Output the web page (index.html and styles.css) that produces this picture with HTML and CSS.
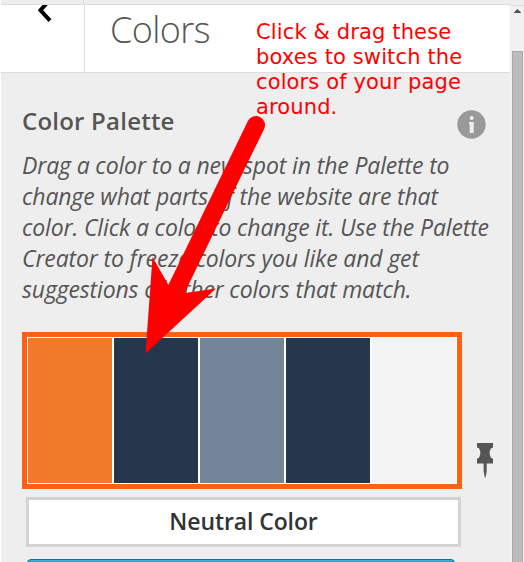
FILE: index.html
```
<!DOCTYPE html>
<html lang="en">
<head>
<meta charset="utf-8">
<title>Colors</title>
<link rel="stylesheet" href="styles.css">
</head>
<body>
<div class="app">
  <main class="panel">
    <div class="strip"><span class="strip-cell"></span></div>
    <header class="header">
      <div class="back">
        <svg width="18" height="20" viewBox="0 0 18 20"><path d="M15 -5.500 L5.500 5.300 L15 15.600" fill="none" stroke="#000" stroke-width="4"/></svg>
      </div>
      <h1 class="title">Colors</h1>
    </header>
    <section class="content">
      <div class="heading">
        <h2 class="subtitle">Color Palette</h2>
        <svg class="info" width="29" height="29" viewBox="0 0 29 29"><circle cx="14.500" cy="14.500" r="14.200" fill="#999"/><circle cx="14.700" cy="8" r="2" fill="#eee"/><path d="M12 12h4.700v11h-4v-8.500H12z" fill="#eee"/></svg>
      </div>
      <p class="description">Drag a color to a new spot in the Palette to<br>change what parts of the website are that<br>color. Click a color to change it. Use the Palette<br>Creator to freeze colors you like and get<br>suggestions of other colors that match.</p>
      <div class="palette-row">
        <div class="palette">
          <div class="swatch orange"></div>
          <div class="swatch navy"></div>
          <div class="swatch slate"></div>
          <div class="swatch navy"></div>
          <div class="swatch light"></div>
        </div>
        <svg class="pin" width="18" height="36" viewBox="0 0 18 36"><path d="M1 0h16v4.500l-2 .8Q12.300 10 15 14.800l2 1v4.700h-6.300v7.500L9.600 34.500h-.8L7.600 28v-7.500H1v-4.700l2-1Q5.700 10 3 5.300l-2-.8z" fill="#555"/></svg>
      </div>
      <div class="neutral">Neutral Color</div>
      <div class="primary"></div>
    </section>
  </main>
  <aside class="scrollbar">
    <svg class="up" width="7" height="4" viewBox="0 0 7 4"><path d="M3.500 0L7 3.500V4H0v-.5z" fill="#505050"/></svg>
    <div class="thumb"></div>
  </aside>
  <p class="note">Click &amp; drag these<br>boxes to switch the<br>colors of your page<br>around.</p>
  <svg class="arrow" width="524" height="562" viewBox="0 0 524 562"><path d="M256 125L174 294" stroke="#f00" stroke-width="18" stroke-linecap="round"/><path d="M145.500 353.500L152.500 257L168.500 285L185 293L216 288.500Z" fill="#f00"/></svg>
</div>
</body>
</html>
```
FILE: styles.css
```
* { box-sizing: border-box; }
body { margin: 0; background: #fff; font-family: "Open Sans", sans-serif; color: #555; }
.app { position: relative; width: 524px; height: 562px; display: flex; overflow: hidden; padding-left: 1px; }
.panel { width: 509px; height: 562px; background: #eee; overflow: hidden; }
.strip { height: 5px; border-bottom: 1px solid #ddd; background: #eee; }
.strip-cell { display: block; width: 83px; height: 4px; border-right: 1px solid #ddd; }
.header { display: flex; height: 68px; background: #fff; border-bottom: 1px solid #ddd; }
.back { width: 84px; border-right: 1px solid #ddd; padding-left: 34px; }
.back svg { display: block; }
.title { margin: 0; padding-left: 25px; font-size: 36px; font-weight: 300; line-height: 50px; letter-spacing: -0.6px; }
.content { padding-left: 21px; }
.heading { display: flex; height: 77px; justify-content: space-between; padding: 32px 24px 0 0; }
.subtitle { margin: 0; font-size: 24px; font-weight: 600; line-height: 32px; letter-spacing: 0.22px; }
.info { margin-top: 5px; }
.description { margin: 0; font-size: 23px; font-style: italic; line-height: 31px; height: 155px; letter-spacing: -0.14px; white-space: nowrap; }
.palette-row { display: flex; margin-top: 27px; height: 157px; }
.palette { width: 440px; display: flex; border: 5px solid #ff6014; }
.swatch { width: 86px; border: 1px solid #fff; }
.orange { background: #f07a29; }
.navy { background: #25374c; }
.slate { background: #748599; }
.light { background: #f3f3f3; }
.pin { margin: 111px 0 0 14px; }
.neutral { width: 435px; height: 50px; margin: 8px 0 0 4px; border: 3px solid #d3d3d3; background: #fff; color: #333; font-size: 23px; font-weight: 600; line-height: 43px; letter-spacing: -0.1px; text-align: center; }
.primary { width: 428px; height: 40px; margin: 12px 0 0 5px; border: 1px solid #0074a2; border-radius: 4px; background: #1e9fcc; box-shadow: inset 0 1px 0 #35b5e0; }
.scrollbar { position: relative; width: 14px; height: 557px; margin-top: 5px; background: #f1f1f1; padding-left: 2px; }
.scrollbar::before { content: ""; position: absolute; left: 0; top: -5px; width: 14px; height: 5px; background: #eee; border-bottom: 1px solid #ddd; }
.up { display: block; margin: 4px 0 0 2px; }
.thumb { width: 11px; height: 530px; margin-top: 38px; border: 1px solid #a8a8a8; background: #bcbcbc; }
.note { position: absolute; left: 256px; top: 20px; margin: 0; color: #f00; font-family: "DejaVu Sans", sans-serif; font-size: 21px; letter-spacing: 0.13px; line-height: 25px; white-space: nowrap; }
.arrow { position: absolute; left: 0; top: 0; }
```
